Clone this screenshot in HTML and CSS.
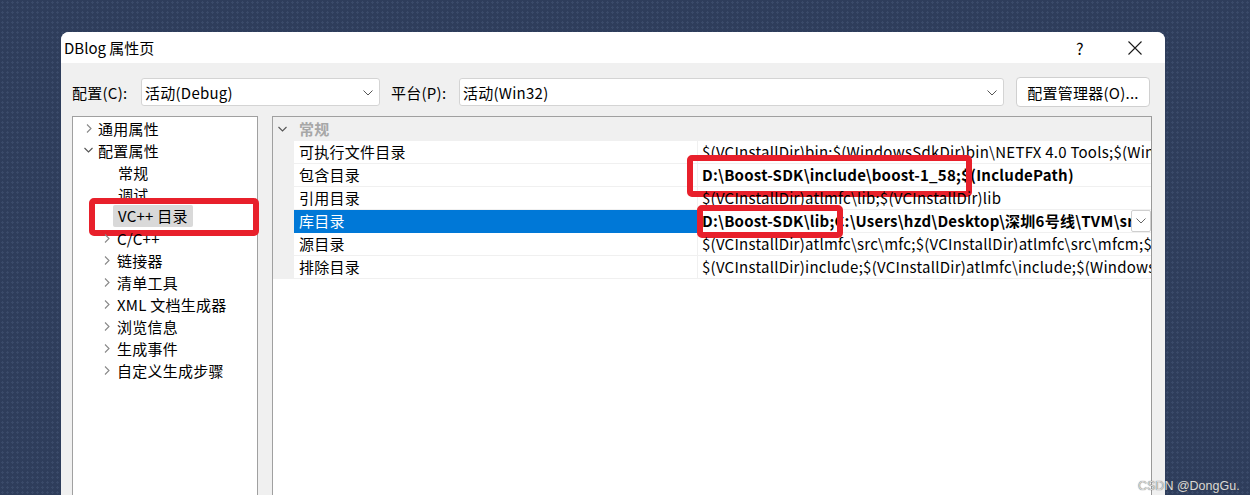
FILE: index.html
```html
<!DOCTYPE html>
<html lang="zh-CN">
<head>
<meta charset="utf-8">
<title>DBlog 属性页</title>
<link rel="stylesheet" href="styles.css">
</head>
<body>
<div class="dialog">
  <div class="titlebar">
    <span class="title">DBlog 属性页</span>
    <span class="help">?</span>
    <span class="close">
      <svg width="14" height="14" viewBox="0 0 14 14"><path d="M0.5 0.5 L13.5 13.5 M13.5 0.5 L0.5 13.5" stroke="#1a1a1a" stroke-width="1.1" fill="none"/></svg>
    </span>
  </div>
  <div class="toolbar">
    <span class="lbl lbl-cfg">配置(C):</span>
    <div class="combo combo-cfg">
      <span>活动(Debug)</span>
      <svg class="cv" width="10" height="6" viewBox="0 0 10 6"><path d="M0.5 0.5 L5 5 L9.5 0.5" stroke="#555" stroke-width="1" fill="none"/></svg>
    </div>
    <span class="lbl lbl-plat">平台(P):</span>
    <div class="combo combo-plat">
      <span>活动(Win32)</span>
      <svg class="cv" width="10" height="6" viewBox="0 0 10 6"><path d="M0.5 0.5 L5 5 L9.5 0.5" stroke="#555" stroke-width="1" fill="none"/></svg>
    </div>
    <button class="btn">配置管理器(O)...</button>
  </div>
  <div class="panels">
    <div class="tree">
      <div class="node top"><svg class="chev" width="6" height="9" viewBox="0 0 6 9"><path d="M1 0.5 L5 4.5 L1 8.5" stroke="#888" stroke-width="1.1" fill="none"/></svg><span>通用属性</span></div>
      <div class="node top"><svg class="chev" width="9" height="6" viewBox="0 0 9 6"><path d="M0.5 1 L4.5 5 L8.5 1" stroke="#555" stroke-width="1.1" fill="none"/></svg><span>配置属性</span></div>
      <div class="node leaf"><span>常规</span></div>
      <div class="node leaf"><span>调试</span></div>
      <div class="node leaf sel"><span class="hl">VC++ 目录</span><i class="mark mark-tree"></i></div>
      <div class="node child"><svg class="chev" width="6" height="9" viewBox="0 0 6 9"><path d="M1 0.5 L5 4.5 L1 8.5" stroke="#888" stroke-width="1.1" fill="none"/></svg><span>C/C++</span></div>
      <div class="node child"><svg class="chev" width="6" height="9" viewBox="0 0 6 9"><path d="M1 0.5 L5 4.5 L1 8.5" stroke="#888" stroke-width="1.1" fill="none"/></svg><span>链接器</span></div>
      <div class="node child"><svg class="chev" width="6" height="9" viewBox="0 0 6 9"><path d="M1 0.5 L5 4.5 L1 8.5" stroke="#888" stroke-width="1.1" fill="none"/></svg><span>清单工具</span></div>
      <div class="node child"><svg class="chev" width="6" height="9" viewBox="0 0 6 9"><path d="M1 0.5 L5 4.5 L1 8.5" stroke="#888" stroke-width="1.1" fill="none"/></svg><span>XML 文档生成器</span></div>
      <div class="node child"><svg class="chev" width="6" height="9" viewBox="0 0 6 9"><path d="M1 0.5 L5 4.5 L1 8.5" stroke="#888" stroke-width="1.1" fill="none"/></svg><span>浏览信息</span></div>
      <div class="node child"><svg class="chev" width="6" height="9" viewBox="0 0 6 9"><path d="M1 0.5 L5 4.5 L1 8.5" stroke="#888" stroke-width="1.1" fill="none"/></svg><span>生成事件</span></div>
      <div class="node child"><svg class="chev" width="6" height="9" viewBox="0 0 6 9"><path d="M1 0.5 L5 4.5 L1 8.5" stroke="#888" stroke-width="1.1" fill="none"/></svg><span>自定义生成步骤</span></div>
    </div>
    <div class="grid">
      <div class="group">
        <svg class="gchev" width="9" height="6" viewBox="0 0 9 6"><path d="M0.5 1 L4.5 5 L8.5 1" stroke="#555" stroke-width="1.1" fill="none"/></svg>
        <span>常规</span>
      </div>
      <div class="row"><div class="gut"></div><div class="name">可执行文件目录</div><div class="val">$(VCInstallDir)bin;$(WindowsSdkDir)bin\NETFX 4.0 Tools;$(WindowsSdkDir)bin;$(VSInstallDir)Common7\Tools\bin;$(VSInstallDir)Common7\tools;$(VSInstallDir)Common7\ide;$(ProgramFiles)\HTML Help Workshop;$(FrameworkSDKDir)\bin;$(MSBuildToolsPath32);$(VSInstallDir);$(SystemRoot)\SysWow64;$(FxCopDir);$(PATH);</div></div>
      <div class="row"><div class="gut"></div><div class="name">包含目录</div><div class="val bold">D:\Boost-SDK\include\boost-1_58;$(IncludePath)<i class="mark mark-inc"></i></div></div>
      <div class="row"><div class="gut"></div><div class="name">引用目录</div><div class="val">$(VCInstallDir)atlmfc\lib;$(VCInstallDir)lib</div></div>
      <div class="row selected"><div class="gut"></div><div class="name">库目录</div><div class="val bold"><span class="vtext">D:\Boost-SDK\lib;C:\Users\hzd\Desktop\深圳6号线\TVM\src\lib;$(LibraryPath)</span><span class="dd"><svg width="10" height="6" viewBox="0 0 10 6"><path d="M0.5 0.5 L5 5 L9.5 0.5" stroke="#666" stroke-width="1" fill="none"/></svg></span><i class="mark mark-lib"></i></div></div>
      <div class="row"><div class="gut"></div><div class="name">源目录</div><div class="val">$(VCInstallDir)atlmfc\src\mfc;$(VCInstallDir)atlmfc\src\mfcm;$(VCInstallDir)atlmfc\src\atl;$(VCInstallDir)crt\src;</div></div>
      <div class="row"><div class="gut"></div><div class="name">排除目录</div><div class="val">$(VCInstallDir)include;$(VCInstallDir)atlmfc\include;$(WindowsSdkDir)include;$(FrameworkSDKDir)\include;$(MSBuildToolsPath32);$(VCInstallDir)lib;</div></div>
    </div>
  </div>
</div>
<div class="watermark">CSDN @DongGu.</div>
</body>
</html>
```
FILE: styles.css
```css
* { box-sizing: border-box; }
html, body { margin: 0; height: 495px; overflow: hidden; }
body {
  padding: 32px 0 0 61px;
  background-color: #2e3d5b;
  background-image: radial-gradient(circle, #3a4a69 1px, transparent 1.2px);
  background-size: 5px 5px;
  font-family: "Segoe UI", "Noto Sans CJK SC", "Noto Sans", sans-serif;
  font-size: 15px;
  letter-spacing: 0.25px;
  color: #000;
  position: relative;
}
.dialog {
  width: 1104px;
  height: 463px;
  background: #f0f0f0;
  border-radius: 8px 8px 0 0;
  overflow: hidden;
}
.titlebar {
  height: 31px;
  background: #fff;
  display: flex;
  align-items: center;
  padding-left: 3px;
}
.title { flex: 1; font-size: 15px; letter-spacing: 0; }
.help { width: 20px; text-align: center; margin-right: 38px; font-size: 16px; }
.close { width: 14px; height: 14px; margin-right: 23px; display: flex; }
.toolbar {
  margin-top: 14px;
  padding-left: 11px;
  height: 30px;
  display: flex;
  align-items: center;
}
.lbl { white-space: nowrap; }
.lbl-cfg { width: 69px; }
.lbl-plat { width: 68px; margin-left: 11px; }
.combo {
  height: 28px;
  background: #fff;
  border: 1px solid #d4d4d4;
  border-radius: 3px;
  display: flex;
  align-items: center;
  justify-content: space-between;
  padding: 0 6px 0 3px;
}
.combo-cfg { width: 239px; }
.combo-plat { width: 545px; }
.cv { margin-top: 1px; }
.btn {
  margin-left: 12px;
  width: 134px;
  height: 30px;
  background: #fff;
  border: 1px solid #d0d0d0;
  border-radius: 4px;
  font: inherit;
  letter-spacing: 0.25px;
  color: #000;
  padding: 0;
}
.panels {
  margin-top: 9px;
  padding-left: 11px;
  display: flex;
  gap: 14px;
  height: 400px;
}
.tree {
  width: 186px;
  background: #fff;
  border: 1px solid #a0a0a0;
  padding-top: 0;
  position: relative;
}
.node {
  height: 22px;
  display: flex;
  align-items: center;
  white-space: nowrap;
  position: relative;
}
.node.top { padding-left: 11px; }
.node.top .chev { width: 9px; margin-right: 5px; }
.node.top svg[width="6"] { padding-left: 1px; }
.node.child { padding-left: 31px; }
.node.child .chev { margin-right: 7px; }
.node.leaf { padding-left: 45px; }
.node.sel { padding-left: 40px; }
.hl {
  background: #d9d9d9;
  padding: 0 5px;
  height: 22px;
  line-height: 22px;
  border-radius: 2px;
}
.mark {
  position: absolute;
  border: 6px solid #e8202b;
  border-radius: 5px;
  pointer-events: none;
}
.mark-tree { left: 16px; top: -7px; width: 170px; height: 38px; }
.grid {
  width: 880px;
  background: #fff;
  border: 1px solid #a0a0a0;
  border-right-color: #999;
}
.group {
  height: 24px;
  background: #f0f0f0;
  display: flex;
  align-items: center;
  padding-left: 5px;
  padding-bottom: 2px;
  color: #a7a7a7;
  font-weight: 600;
}
.gchev { margin-right: 12px; margin-top: 2px; }
.row {
  height: 23px;
  display: flex;
}
.gut { width: 21px; background: #f0f0f0; }
.name {
  width: 404px;
  border-right: 1px solid #f0f0f0;
  border-bottom: 1px solid #f0f0f0;
  padding-left: 5px;
  line-height: 22px;
  white-space: nowrap;
}
.val {
  flex: 1;
  border-bottom: 1px solid #f0f0f0;
  padding-left: 4px;
  line-height: 22px;
  white-space: nowrap;
  position: relative;
  min-width: 0;
}
.val:not(.bold) { overflow: hidden; }
.val .vtext { display: block; overflow: hidden; margin-right: 20px; }
.bold { font-weight: 700; }
.selected .name { background: #0078d7; color: #fff; border-bottom-color: #0078d7; }
.dd {
  position: absolute;
  right: 0; top: 0;
  width: 20px; height: 22px;
  background: #fff;
  border: 1px solid #cfcfcf;
  border-radius: 2px;
  display: flex;
  align-items: center;
  justify-content: center;
}
.mark-inc { left: -11px; top: -9px; width: 285px; height: 42px; }
.mark-lib { left: -1px; top: -5px; width: 146px; height: 33px; }
.watermark {
  position: absolute;
  left: 1138px;
  top: 479px;
  font-family: "Liberation Sans", sans-serif;
  font-size: 12.5px;
  letter-spacing: 0;
  color: #d8d8d8;
  text-shadow: 0 0 1px #444;
}
```
